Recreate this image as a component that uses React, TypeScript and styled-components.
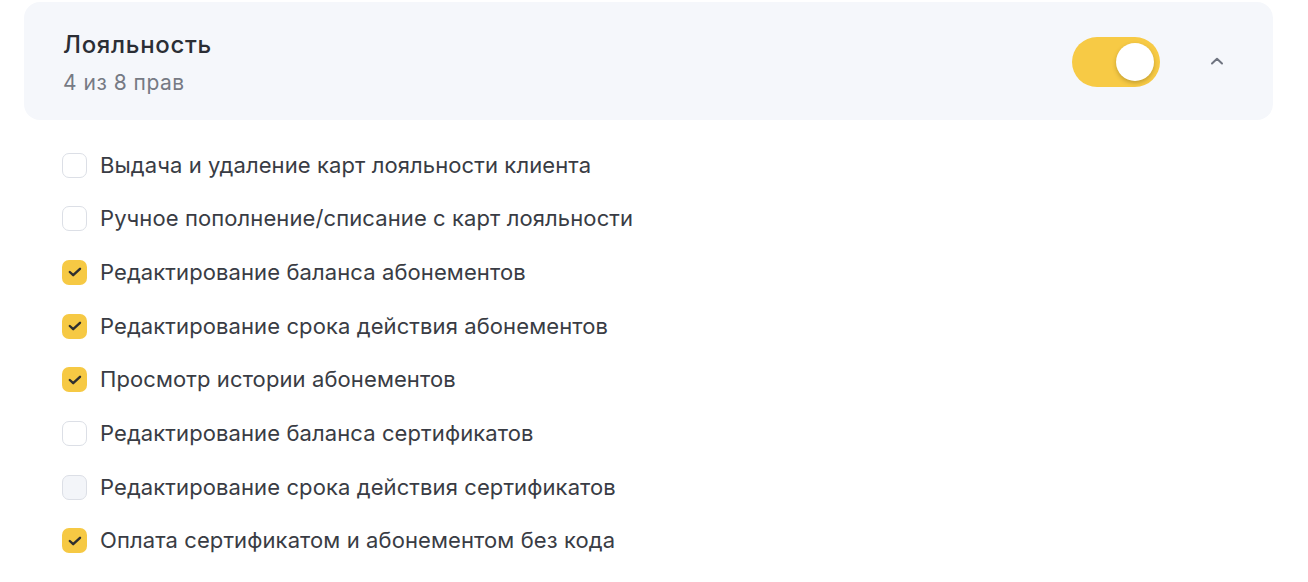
import React, { useState } from 'react'
import styled, { createGlobalStyle } from 'styled-components'

const GlobalStyle = createGlobalStyle`
  body {
    margin: 0;
    background: #ffffff;
    font-family: Inter, 'Noto Sans', sans-serif;
    color: #2e3138;
  }
`

const Page = styled.div`
  padding: 2px 35px 0 24px;
`

const Panel = styled.div`
  background: #f5f7fb;
  border-radius: 16px;
  padding: 0 44px 0 39px;
  height: 118px;
  display: flex;
  align-items: center;
  gap: 45px;
`

const Heading = styled.div`
  flex: 1;
  display: flex;
  flex-direction: column;
  gap: 11px;
  padding-top: 4px;
  h2 {
    margin: 0;
    font: 500 24px/28px Inter, sans-serif;
    letter-spacing: 0.7px;
    color: #2b2e35;
  }
  span {
    font: 400 21px/26px Inter, sans-serif;
    letter-spacing: 0.5px;
    color: #767a84;
  }
`

const Toggle = styled.button<{ on: boolean }>`
  width: 88px;
  height: 50px;
  border: none;
  border-radius: 25px;
  padding: 6px;
  background: ${(p) => (p.on ? '#f7ca45' : '#d8dce4')};
  display: flex;
  justify-content: ${(p) => (p.on ? 'flex-end' : 'flex-start')};
  align-items: center;
  cursor: pointer;
  margin-top: 2px;
  .knob {
    width: 38px;
    height: 38px;
    border-radius: 50%;
    background: #ffffff;
    box-shadow: 0 2px 4px rgba(80, 60, 0, 0.3);
  }
`

const Chevron = styled.button`
  width: 24px;
  height: 24px;
  border: none;
  background: none;
  padding: 0;
  display: flex;
  align-items: center;
  justify-content: center;
  color: #6f7480;
`

const List = styled.ul`
  list-style: none;
  margin: 32.5px 0 0;
  padding: 0 0 0 38px;
  display: flex;
  flex-direction: column;
  gap: 28.7px;
`

const Row = styled.li`
  display: flex;
  align-items: center;
  gap: 13px;
  height: 25px;
  font: 400 22px/25px Inter, sans-serif;
  letter-spacing: 0.1px;
  color: #393c44;
`

const Box = styled.span<{ checked: boolean; hover?: boolean }>`
  width: 25px;
  height: 25px;
  box-sizing: border-box;
  border-radius: 7px;
  flex-shrink: 0;
  display: flex;
  align-items: center;
  justify-content: center;
  background: ${(p) => (p.checked ? '#f6c944' : p.hover ? '#f3f5f9' : '#ffffff')};
  border: ${(p) => (p.checked ? 'none' : '1.5px solid #dcdfe6')};
`

const rights = [
  { label: 'Выдача и удаление карт лояльности клиента', checked: false },
  { label: 'Ручное пополнение/списание с карт лояльности', checked: false },
  { label: 'Редактирование баланса абонементов', checked: true },
  { label: 'Редактирование срока действия абонементов', checked: true },
  { label: 'Просмотр истории абонементов', checked: true },
  { label: 'Редактирование баланса сертификатов', checked: false },
  { label: 'Редактирование срока действия сертификатов', checked: false, hover: true },
  { label: 'Оплата сертификатом и абонементом без кода', checked: true },
]

export default function App() {
  const [on, setOn] = useState(true)
  const count = rights.filter((r) => r.checked).length
  return (
    <Page>
      <GlobalStyle />
      <Panel>
        <Heading>
          <h2>Лояльность</h2>
          <span>
            {count} из {rights.length} прав
          </span>
        </Heading>
        <Toggle on={on} onClick={() => setOn(!on)}>
          <div className='knob' />
        </Toggle>
        <Chevron>
          <svg width='16' height='10' viewBox='0 0 16 10' fill='none'>
            <path
              d='M3 7.5L8 2.8L13 7.5'
              stroke='currentColor'
              strokeWidth='2'
              strokeLinecap='round'
              strokeLinejoin='round'
            />
          </svg>
        </Chevron>
      </Panel>
      <List>
        {rights.map((r) => (
          <Row key={r.label}>
            <Box checked={r.checked} hover={r.hover}>
              {r.checked && (
                <svg width='14' height='10' viewBox='0 0 14 10' fill='none'>
                  <path
                    d='M1.8 5L5.2 8.2L12 1.8'
                    stroke='#2f2f2f'
                    strokeWidth='2.4'
                    strokeLinecap='round'
                    strokeLinejoin='round'
                  />
                </svg>
              )}
            </Box>
            {r.label}
          </Row>
        ))}
      </List>
    </Page>
  )
}
